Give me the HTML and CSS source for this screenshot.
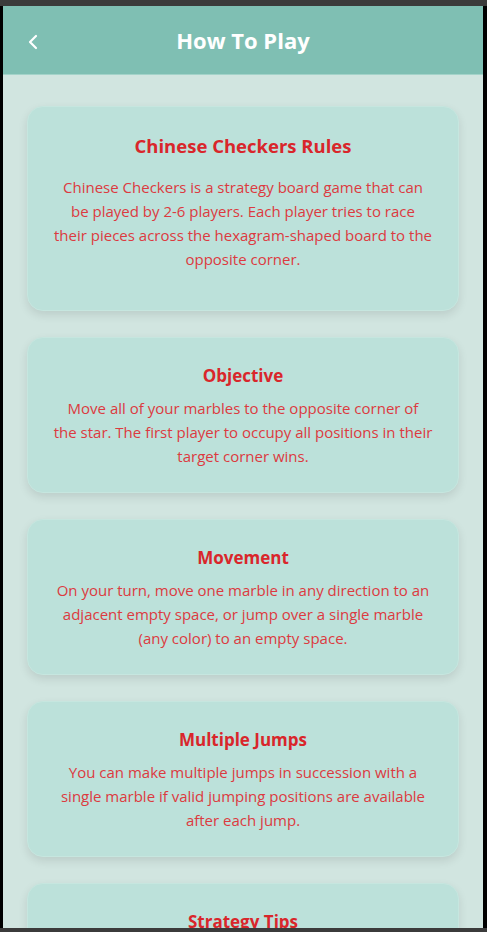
FILE: index.html
```html
<!DOCTYPE html>
<html lang="en">
<head>
<meta charset="utf-8">
<title>How To Play</title>
<link rel="stylesheet" href="styles.css">
</head>
<body>
<div class="topbar"></div>
<div class="frame">
  <div class="app">
    <header class="header">
      <button class="back" aria-label="Back">
        <svg width="12" height="16" viewBox="0 0 12 16"><path d="M9 2 L3 8 L9 14" fill="none" stroke="#fff" stroke-width="2.2" stroke-linecap="round" stroke-linejoin="round"/></svg>
      </button>
      <h1 class="header-title">How To Play</h1>
    </header>
    <main class="content">
      <section class="card intro">
        <h2 class="card-title big">Chinese Checkers Rules</h2>
        <p class="card-text">Chinese Checkers is a strategy board game that can<br>be played by 2-6 players. Each player tries to race<br>their pieces across the hexagram-shaped board to the<br>opposite corner.</p>
      </section>
      <section class="card">
        <h3 class="card-title">Objective</h3>
        <p class="card-text">Move all of your marbles to the opposite corner of<br>the star. The first player to occupy all positions in their<br>target corner wins.</p>
      </section>
      <section class="card">
        <h3 class="card-title">Movement</h3>
        <p class="card-text">On your turn, move one marble in any direction to an<br>adjacent empty space, or jump over a single marble<br>(any color) to an empty space.</p>
      </section>
      <section class="card">
        <h3 class="card-title">Multiple Jumps</h3>
        <p class="card-text">You can make multiple jumps in succession with a<br>single marble if valid jumping positions are available<br>after each jump.</p>
      </section>
      <section class="card">
        <h3 class="card-title">Strategy Tips</h3>
        <p class="card-text">Build ladders with your marbles to make long chains<br>of jumps, and try to keep your pieces moving<br>together.</p>
      </section>
    </main>
  </div>
</div>
<div class="bottombar"></div>
</body>
</html>
```
FILE: styles.css
```css
html, body {
  margin: 0;
  padding: 0;
  height: 932px;
  overflow: hidden;
}
body {
  display: flex;
  flex-direction: column;
  background: #000;
  font-family: "Open Sans", "Noto Sans", sans-serif;
}
.topbar {
  height: 6px;
  flex: none;
  background: #3b3b3b;
}
.bottombar {
  height: 4px;
  flex: none;
  background: #3b3b3b;
}
.frame {
  flex: 1;
  min-height: 0;
  padding: 0 4px 0 3px;
  display: flex;
}
.app {
  flex: 1;
  overflow: hidden;
  background: #d1e5e0;
  display: flex;
  flex-direction: column;
}
.header {
  flex: none;
  height: 68px;
  background: #7fbfb3;
  border-bottom: 1px solid #a3d3c9;
  display: flex;
  align-items: center;
  justify-content: center;
  position: relative;
}
.back {
  position: absolute;
  left: 20px;
  top: 26px;
  width: 20px;
  height: 20px;
  padding: 0;
  border: 0;
  background: none;
  display: flex;
  align-items: center;
  justify-content: center;
}
.header-title {
  margin: 0;
  color: #fff;
  font-size: 22px;
  font-weight: 700;
  line-height: 30px;
}
.content {
  padding: 31px 24px;
  display: flex;
  flex-direction: column;
  gap: 26px;
}
.card {
  flex: none;
  background: #bce1da;
  border: 1px solid #c6e6df;
  border-radius: 16px;
  padding: 24px 12px;
  box-shadow: 0 4px 10px rgba(0, 0, 0, 0.1);
  text-align: center;
}
.card-title {
  margin: 0 0 7px;
  color: #d9262b;
  font-size: 17px;
  font-weight: 700;
  line-height: 27px;
}
.card-title.big {
  font-size: 18.5px;
  line-height: 30px;
  margin-bottom: 14px;
}
.card-text {
  margin: 0;
  color: #dc3a40;
  font-size: 15px;
  line-height: 24px;
  white-space: nowrap;
}
.intro .card-text {
  margin-bottom: 15px;
}
```
